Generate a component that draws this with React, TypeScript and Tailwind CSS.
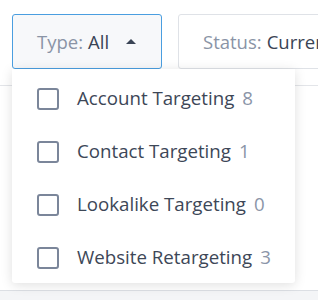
import React from 'react'

const items = [
  { id: 1, label: 'Account Targeting', count: 8 },
  { id: 2, label: 'Contact Targeting', count: 1 },
  { id: 3, label: 'Lookalike Targeting', count: 0 },
  { id: 4, label: 'Website Retargeting', count: 3 },
]

const App = () => {
  return (
    <div className="relative w-full h-[300px] bg-white overflow-hidden font-['Open_Sans',sans-serif]">
      <div className="flex flex-col h-full">
        {/* filter bar */}
        <div className="flex gap-[16px] pl-3 pt-[14px]">
          <button className="flex items-center shrink-0 w-[150px] h-[55px] pl-[24px] border border-[#4a9ee0] rounded-[3px] bg-[#f7f8fa] text-[18.5px]">
            <span className="text-[#8a94a6]">Type:</span>
            <span className="ml-[5px] text-[#3a4455]">All</span>
            <svg width="10" height="5" viewBox="0 0 10 5" className="ml-[17px]">
              <path d="M0 5 L5 0 L10 5 Z" fill="#3a4455" />
            </svg>
          </button>
          <button className="flex items-center shrink-0 w-[170px] h-[55px] pl-[24px] border border-[#dfe2e7] rounded-[3px] bg-white text-[18.5px] whitespace-nowrap">
            <span className="text-[#8a94a6]">Status:</span>
            <span className="ml-[5px] text-[#3a4455]">Current</span>
          </button>
        </div>
        <div className="mt-[16px] flex-1 border-t border-[#e3e5e9]" />
        <div className="h-[10px] border-t border-[#dcdfe4] bg-[#f4f5f7]" />
      </div>

      {/* dropdown menu */}
      <div className="absolute top-[69px] left-3 w-[283px] h-[214px] bg-white rounded-b-[3px] shadow-[0_2px_12px_rgba(0,0,0,0.13)] pt-[3px]">
        {items.map((item) => (
          <div key={item.id} className="flex items-center h-[53px] pl-[25px] whitespace-nowrap">
            <div className="w-[22px] h-[22px] border-2 border-[#7b869a] rounded-[3px] shrink-0" />
            <span className="ml-[18px] text-[18.7px] text-[#3d4757]">{item.label}</span>
            <span className="ml-[8px] text-[18.7px] text-[#8b95a8]">{item.count}</span>
          </div>
        ))}
      </div>
    </div>
  )
}

export default App
